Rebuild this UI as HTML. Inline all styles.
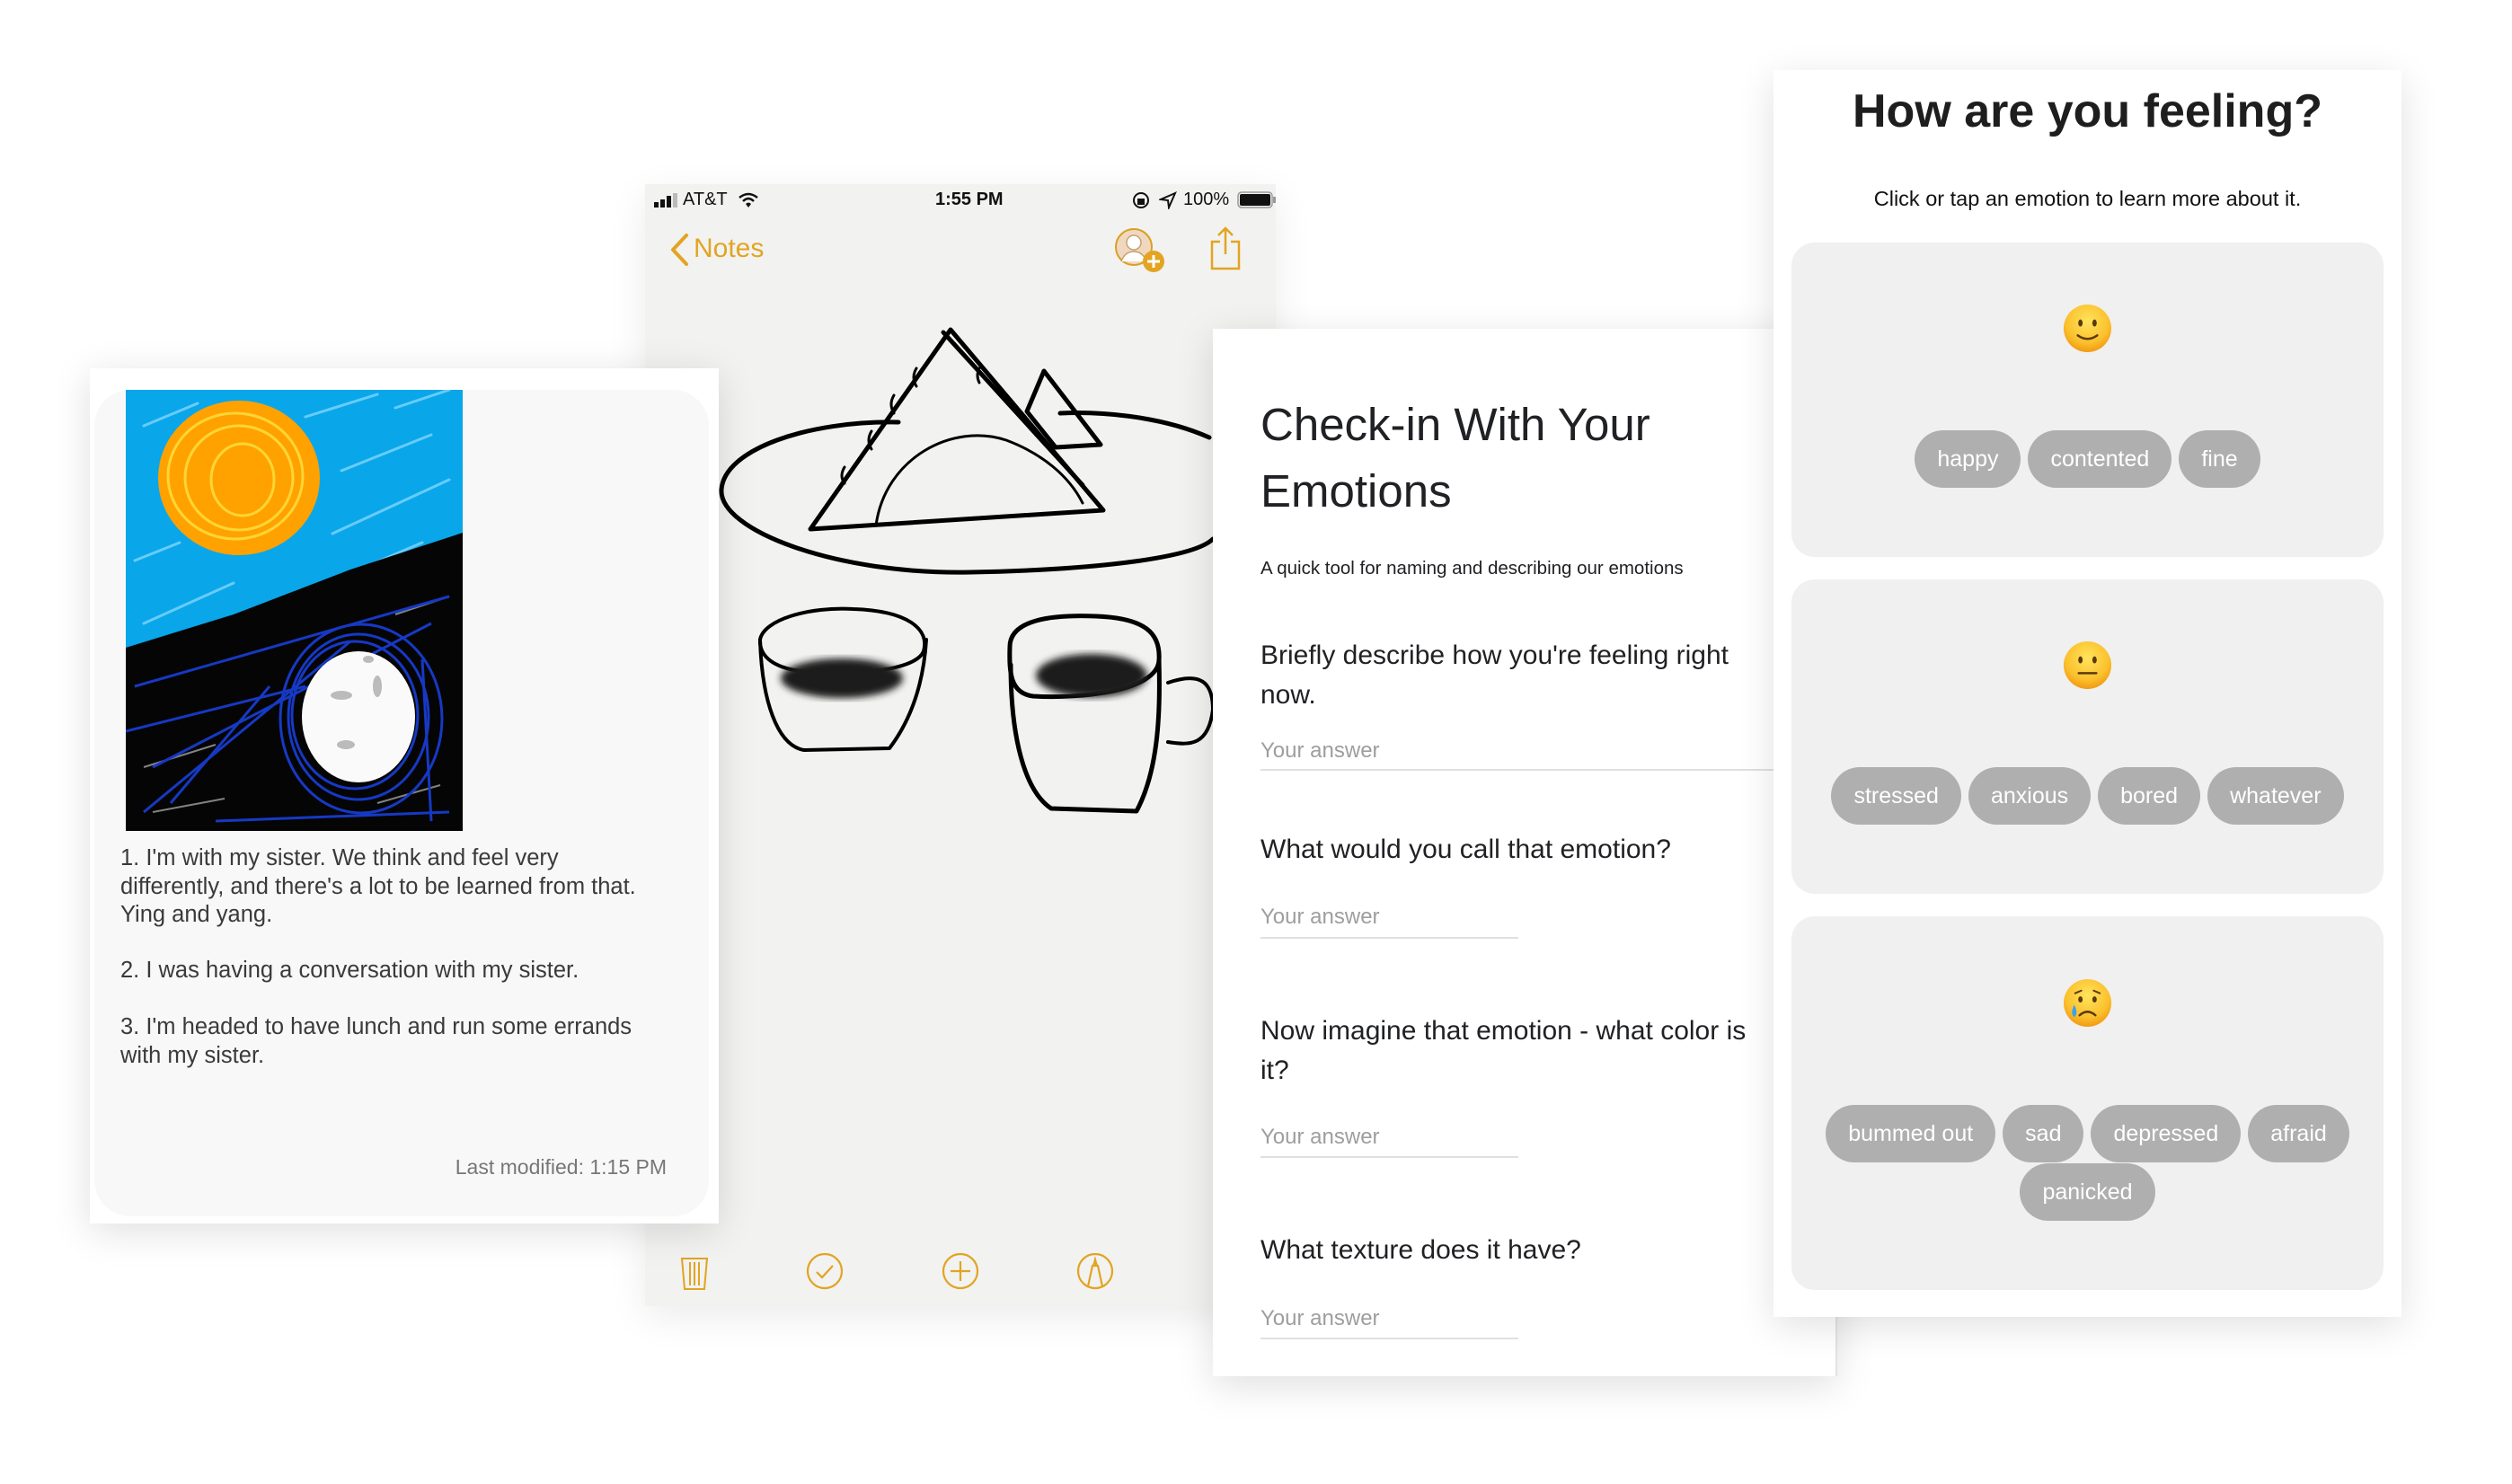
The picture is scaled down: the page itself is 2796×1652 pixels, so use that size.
<!DOCTYPE html>
<html><head><meta charset="utf-8">
<style>
*{margin:0;padding:0;box-sizing:border-box}
html,body{width:2796px;height:1652px;background:#fff;overflow:hidden;font-family:"Liberation Sans",Arial,sans-serif}
.abs{position:absolute}
#phone{left:718px;top:205px;width:702px;height:1249px;background:#f2f2f1;box-shadow:0 12px 40px rgba(0,0,0,0.08);z-index:1}
#left{left:100px;top:410px;width:700px;height:952px;background:#fff;box-shadow:0 8px 40px rgba(0,0,0,0.13);z-index:2}
#form{left:1350px;top:366px;width:695px;height:1166px;background:#fff;box-shadow:0 10px 40px rgba(0,0,0,0.13);border-right:2px solid #e2e2e2;z-index:3}
#feel{left:1974px;top:78px;width:699px;height:1388px;background:#fff;box-shadow:0 10px 40px rgba(0,0,0,0.12);z-index:4}
.lt{position:absolute;left:34px;font-size:25.5px;line-height:31.5px;color:#3a3a3a;white-space:nowrap}
.ft{position:absolute;left:53px;color:#202124;white-space:nowrap}
.q{font-size:30px;line-height:44px}
.ans{font-size:24px;line-height:28px;color:#9e9e9e}
.ul{position:absolute;left:53px;height:2px;background:#e0e0e0}
.panel{position:absolute;left:20px;width:659px;background:#f0f0f0;border-radius:26px}
.emo{position:absolute;left:302px;width:55px;height:55px}
.pills{position:absolute;left:0;width:659px;text-align:center;font-size:0}
.pill{display:inline-block;height:64px;line-height:64px;padding:0 25px;margin:0 4px;border-radius:32px;background:#afafaf;color:#fff;font-size:25px;vertical-align:top}
</style></head><body>

<div id="phone" class="abs">
  <div class="abs" style="left:10px;top:6px;width:692px;height:28px;font-size:20px;color:#111">
    <svg class="abs" style="left:0;top:4px" width="30" height="16"><rect x="0" y="10" width="5" height="6" fill="#111"/><rect x="7" y="7" width="5" height="9" fill="#111"/><rect x="14" y="3" width="5" height="13" fill="#111"/><rect x="21" y="0" width="5" height="16" fill="#bbb"/></svg>
    <span class="abs" style="left:32px;top:0">AT&amp;T</span>
    <svg class="abs" style="left:94px;top:3px" width="22" height="18" viewBox="0 0 22 18"><path d="M1 6 Q11 -2 21 6" stroke="#111" stroke-width="2.5" fill="none"/><path d="M5 10 Q11 4 17 10" stroke="#111" stroke-width="2.5" fill="none"/><path d="M8 13 L11 17 L14 13 Q11 10 8 13Z" fill="#111"/></svg>
    <span class="abs" style="left:313px;top:0;font-weight:bold;font-size:20px">1:55 PM</span>
    <svg class="abs" style="left:532px;top:2px" width="22" height="22"><circle cx="10" cy="10" r="8" stroke="#111" stroke-width="2" fill="none"/><rect x="6" y="8" width="8" height="7" fill="#111"/></svg>
    <svg class="abs" style="left:562px;top:2px" width="20" height="20"><path d="M18 2 L2 9 L10 10 L11 18 Z" stroke="#111" stroke-width="2" fill="none"/></svg>
    <span class="abs" style="left:589px;top:0">100%</span>
    <svg class="abs" style="left:649px;top:2px" width="44" height="20"><rect x="1" y="1" width="38" height="17" rx="4" stroke="#999" stroke-width="1.5" fill="none"/><rect x="3" y="3" width="34" height="13" rx="2" fill="#111"/><rect x="40" y="6" width="3" height="7" fill="#999"/></svg>
  </div>
  <svg class="abs" style="left:26px;top:55px" width="24" height="36"><path d="M20 2 L5 18 L20 34" stroke="#e2a421" stroke-width="4" fill="none" stroke-linecap="round" stroke-linejoin="round"/></svg>
  <div class="abs" style="left:54px;top:54px;font-size:30px;line-height:36px;color:#e2a421">Notes</div>
  <svg class="abs" style="left:522px;top:48px" width="60" height="56" viewBox="0 0 60 56"><circle cx="22" cy="22" r="20" fill="#f0d8c0" stroke="#d9a020" stroke-width="2"/><circle cx="22" cy="17" r="8" fill="#fff" stroke="#c8a070" stroke-width="1.5"/><path d="M8 38 Q12 27 22 27 Q32 27 36 38" fill="#fff" stroke="#c8a070" stroke-width="1.5"/><circle cx="44" cy="38" r="12" fill="#e2a421"/><path d="M44 31 V45 M37 38 H51" stroke="#fff" stroke-width="3"/></svg>
  <svg class="abs" style="left:628px;top:46px" width="36" height="50" viewBox="0 0 36 50"><path d="M12 18 H3 V48 H33 V18 H24" stroke="#e2a421" stroke-width="2.5" fill="none"/><path d="M18 32 V3 M10 11 L18 3 L26 11" stroke="#e2a421" stroke-width="2.5" fill="none"/></svg>

  <svg class="abs" style="left:0;top:0" width="702" height="1249" viewBox="718 205 702 1249">
    <defs><filter id="bl"><feGaussianBlur stdDeviation="4"/></filter></defs>
    <g stroke="#000" stroke-width="5" fill="none" stroke-linecap="round" stroke-linejoin="round">
      <path d="M1346 487 C1290 462 1220 458 1180 460 M1000 470 C900 468 806 500 803 545 C800 590 930 640 1080 637 C1230 634 1330 620 1350 600"/>
      <path d="M1058 367 L902 589 L1228 568 Z"/>
      <path d="M1050 370 L1205 540 M1225 495 L1162 413 L1143 458 L1175 498 Z"/>
      <path d="M975 585 C985 510 1060 470 1120 490 C1160 505 1190 530 1205 560" stroke-width="3"/>
      <path d="M1020 410 q-6 10 0 20 M995 440 q-6 10 0 20 M970 480 q-6 10 0 20 M940 520 q-6 10 0 18 M1090 410 q-4 8 0 16" stroke-width="3"/>
      <path d="M846 712 C850 690 900 675 950 678 C1010 680 1035 700 1028 725 C1020 745 960 752 900 748 C860 745 845 730 846 712 Z" stroke-width="4"/>
      <path d="M846 712 C848 780 865 830 895 835 L990 833 C1015 800 1028 760 1031 712" stroke-width="4"/>
      <path d="M1124 720 C1124 690 1170 684 1220 686 C1275 688 1292 705 1290 735 C1288 770 1200 778 1150 775 C1125 772 1123 750 1124 720 Z"/>
      <path d="M1125 740 C1125 820 1140 880 1170 900 L1265 903 C1288 860 1292 800 1290 735"/>
      <path d="M1300 760 C1335 748 1350 758 1350 790 C1345 830 1325 830 1300 826" stroke-width="4"/>
    </g>
    <ellipse cx="937" cy="755" rx="68" ry="22" fill="#1a1a1a" filter="url(#bl)"/>
    <ellipse cx="1215" cy="752" rx="62" ry="24" fill="#1a1a1a" filter="url(#bl)"/>
  </svg>

  <svg class="abs" style="left:38px;top:1192px" width="34" height="40" viewBox="0 0 34 40"><path d="M3 4 H31 L28 38 H6 Z M12 8 V34 M17 8 V34 M22 8 V34" stroke="#e2a421" stroke-width="2" fill="none"/></svg>
  <svg class="abs" style="left:178px;top:1188px" width="44" height="44"><circle cx="22" cy="22" r="19" stroke="#e2a421" stroke-width="2.2" fill="none"/><path d="M13 23 L19 29 L31 16" stroke="#e2a421" stroke-width="2.2" fill="none"/></svg>
  <svg class="abs" style="left:329px;top:1188px" width="44" height="44"><circle cx="22" cy="22" r="19" stroke="#e2a421" stroke-width="2.2" fill="none"/><path d="M22 11 V33 M11 22 H33" stroke="#e2a421" stroke-width="2.2"/></svg>
  <svg class="abs" style="left:479px;top:1188px" width="44" height="44"><circle cx="22" cy="22" r="19" stroke="#e2a421" stroke-width="2.2" fill="none"/><path d="M14 39 L19 16 H25 L30 39" stroke="#e2a421" stroke-width="2.2" fill="none"/><path d="M19 16 L22 5 L25 16 Z" fill="#e2a421"/></svg>
</div>

<div id="left" class="abs">
  <div class="abs" style="left:5px;top:24px;width:684px;height:920px;background:#f8f8f8;border-radius:40px"></div>
  <svg class="abs" style="left:40px;top:24px" width="375" height="491" viewBox="0 0 375 491">
    <rect width="375" height="491" fill="#0aa6ea"/>
    <g stroke="#7fd6ff" stroke-width="3" stroke-linecap="round" opacity="0.8">
      <path d="M20 40 L80 15 M200 30 L280 5 M240 90 L340 50 M230 160 L360 100 M190 230 L330 170 M20 260 L120 215 M10 190 L60 170 M300 20 L360 0 M250 250 L360 200 M30 300 L90 270 M140 260 L220 225"/>
    </g>
    <path d="M0 287 L120 250 L250 200 L375 159 L375 491 L0 491 Z" fill="#050505"/>
    <g stroke="#fff" stroke-width="2" opacity="0.5"><path d="M10 330 L80 310 M20 420 L100 395 M300 250 L360 230 M280 460 L350 440 M30 470 L110 455"/></g>
    <ellipse cx="126" cy="98" rx="90" ry="86" fill="#ffa200"/>
    <g stroke="#ffd634" stroke-width="3" fill="none"><ellipse cx="126" cy="98" rx="60" ry="58"/><ellipse cx="130" cy="100" rx="35" ry="40"/><ellipse cx="122" cy="96" rx="75" ry="70"/></g>
    <g stroke="#1639c4" stroke-width="3" fill="none">
      <ellipse cx="259" cy="364" rx="78" ry="92"/><ellipse cx="262" cy="366" rx="90" ry="105"/><ellipse cx="255" cy="362" rx="70" ry="82"/>
      <path d="M10 330 L360 230 M20 470 L250 280 M30 420 L340 260 M50 460 L160 330 M0 380 L200 330 M100 480 L360 470 M330 300 L340 480"/>
    </g>
    <ellipse cx="259" cy="364" rx="63" ry="73" fill="#fafafa"/>
    <g fill="#bbb"><ellipse cx="240" cy="340" rx="12" ry="5"/><ellipse cx="280" cy="330" rx="5" ry="12"/><ellipse cx="245" cy="395" rx="10" ry="5"/><ellipse cx="270" cy="300" rx="6" ry="4"/></g>
  </svg>
  <div class="lt" style="top:530px">1. I'm with my sister. We think and feel very<br>differently, and there's a lot to be learned from that.<br>Ying and yang.</div>
  <div class="lt" style="top:655px">2. I was having a conversation with my sister.</div>
  <div class="lt" style="top:718px">3. I'm headed to have lunch and run some errands<br>with my sister.</div>
  <div class="abs" style="right:58px;top:874px;font-size:23px;line-height:30px;color:#777">Last modified: 1:15 PM</div>
</div>

<div id="form" class="abs">
  <div class="ft" style="top:70px;font-size:51px;line-height:74px">Check-in With Your<br>Emotions</div>
  <div class="ft" style="top:255px;font-size:20.5px;line-height:24px">A quick tool for naming and describing our emotions</div>
  <div class="ft q" style="top:342px">Briefly describe how you're feeling right<br>now.</div>
  <div class="ft ans" style="top:456px">Your answer</div>
  <div class="ul" style="top:490px;width:642px"></div>
  <div class="ft q" style="top:558px">What would you call that emotion?</div>
  <div class="ft ans" style="top:641px">Your answer</div>
  <div class="ul" style="top:677px;width:287px"></div>
  <div class="ft q" style="top:760px">Now imagine that emotion - what color is<br>it?</div>
  <div class="ft ans" style="top:886px">Your answer</div>
  <div class="ul" style="top:921px;width:287px"></div>
  <div class="ft q" style="top:1004px">What texture does it have?</div>
  <div class="ft ans" style="top:1088px">Your answer</div>
  <div class="ul" style="top:1123px;width:287px"></div>
</div>

<div id="feel" class="abs">
  <div class="abs" style="left:0;top:16px;width:699px;text-align:center;font-size:52px;font-weight:bold;line-height:60px;color:#1e1e1e">How are you feeling?</div>
  <div class="abs" style="left:0;top:129px;width:699px;text-align:center;font-size:23.5px;line-height:28px;color:#111">Click or tap an emotion to learn more about it.</div>

  <div class="panel" style="top:192px;height:350px">
    <svg class="emo" style="top:68px" viewBox="0 0 56 56"><defs><radialGradient id="g1" cx="0.5" cy="0.35" r="0.65"><stop offset="0" stop-color="#ffe45c"/><stop offset="0.7" stop-color="#fbc02d"/><stop offset="1" stop-color="#f29a12"/></radialGradient></defs><circle cx="28" cy="28" r="27" fill="url(#g1)"/><ellipse cx="20" cy="22" rx="2.5" ry="4" fill="#5b3a10"/><ellipse cx="36" cy="22" rx="2.5" ry="4" fill="#5b3a10"/><path d="M17 36 Q28 44 39 36" stroke="#5b3a10" stroke-width="2.5" fill="none" stroke-linecap="round"/></svg>
    <div class="pills" style="top:209px"><span class="pill">happy</span><span class="pill">contented</span><span class="pill">fine</span></div>
  </div>
  <div class="panel" style="top:567px;height:350px">
    <svg class="emo" style="top:68px" viewBox="0 0 56 56"><circle cx="28" cy="28" r="27" fill="url(#g1)"/><ellipse cx="20" cy="22" rx="2.5" ry="4" fill="#5b3a10"/><ellipse cx="36" cy="22" rx="2.5" ry="4" fill="#5b3a10"/><path d="M18 37 H38" stroke="#5b3a10" stroke-width="2.5" stroke-linecap="round"/></svg>
    <div class="pills" style="top:209px"><span class="pill">stressed</span><span class="pill">anxious</span><span class="pill">bored</span><span class="pill">whatever</span></div>
  </div>
  <div class="panel" style="top:942px;height:416px">
    <svg class="emo" style="top:69px" viewBox="0 0 56 56"><circle cx="28" cy="28" r="27" fill="url(#g1)"/><path d="M14 17 L21 14 M42 17 L35 14" stroke="#5b3a10" stroke-width="2" stroke-linecap="round"/><ellipse cx="20" cy="24" rx="2.5" ry="3.5" fill="#5b3a10"/><ellipse cx="36" cy="24" rx="2.5" ry="3.5" fill="#5b3a10"/><path d="M19 42 Q28 34 37 42" stroke="#5b3a10" stroke-width="2.5" fill="none" stroke-linecap="round"/><path d="M13 30 Q8 40 13 44 Q18 40 13 30Z" fill="#3aa0f0"/></svg>
    <div class="pills" style="top:210px"><span class="pill">bummed out</span><span class="pill">sad</span><span class="pill">depressed</span><span class="pill">afraid</span><br><span class="pill" style="margin-top:1px">panicked</span></div>
  </div>
</div>
</body></html>
